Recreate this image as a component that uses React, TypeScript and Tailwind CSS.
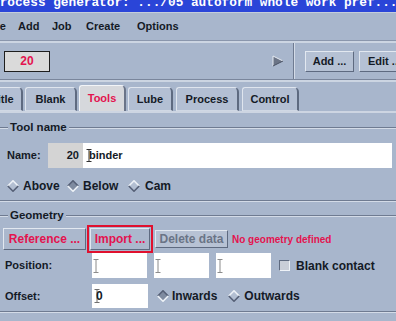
import React from "react";

const RED = "text-[#e3134f]";

function Etched({ className = "" }: { className?: string }) {
  return (
    <div
      className={`h-[2px] border-t border-b border-t-[#6f7b91] border-b-[#d3dbe7] ${className}`}
    />
  );
}

function Diamond({ on = false }: { on?: boolean }) {
  return (
    <svg width="12" height="12" viewBox="0 0 12 12" className="shrink-0">
      <polygon points="6,0.8 11.2,6 6,11.2 0.8,6" fill={on ? "#7f8ba0" : "#b3bfd2"} />
      <polyline
        points="0.8,6 6,0.8 11.2,6"
        fill="none"
        stroke={on ? "#566076" : "#eef2f7"}
        strokeWidth="1.6"
      />
      <polyline
        points="0.8,6 6,11.2 11.2,6"
        fill="none"
        stroke={on ? "#eef2f7" : "#566076"}
        strokeWidth="1.6"
      />
    </svg>
  );
}

function IBeam({ color = "#8c8c8c", h = 14 }: { color?: string; h?: number }) {
  return (
    <svg width="6" height={h} viewBox={`0 0 6 ${h}`} className="shrink-0">
      <path
        d={`M0.5 0.5h5 M3 0.5v${h - 1} M0.5 ${h - 0.5}h5`}
        stroke={color}
        strokeWidth="1"
        fill="none"
      />
    </svg>
  );
}

function Tab({
  label,
  w,
  active = false,
  className = "",
}: {
  label: string;
  w: string;
  active?: boolean;
  className?: string;
}) {
  return (
    <div
      className={`${w} ${className} shrink-0 flex items-center justify-center rounded-tl-[3px] rounded-tr-[5px] border-t border-l border-r-2 ${
        active
          ? "h-[26px] bg-[#d6d8dc] text-[#e3134f] border-t-[#f2f4f7] border-l-[#f2f4f7] border-r-[#6a7488]"
          : "h-[24px] bg-[#b3bfd3] text-[#141a26] border-t-[#dfe5ee] border-l-[#dfe5ee] border-r-[#5e6a80] border-b border-b-[#d0d8e4]"
      } text-[11px] font-bold`}
    >
      {label}
    </div>
  );
}

function GroupHeader({ label }: { label: string }) {
  return (
    <div className="h-[14px] flex items-center">
      <Etched className="w-[8px] shrink-0" />
      <span className="px-[2px] text-[11.5px] font-bold text-[#141a26] leading-none">{label}</span>
      <Etched className="flex-1" />
    </div>
  );
}

export default function App() {
  return (
    <div className="w-[396px] h-[321px] overflow-hidden bg-[#a8b6cc] font-['Liberation_Sans',Arial,sans-serif] text-[#141a26] flex flex-col">
      {/* Title bar */}
      <div className="h-[12px] shrink-0 bg-[#2a45d8] overflow-hidden whitespace-nowrap">
        <div className="ml-[-8px] mt-[-4px] font-['Liberation_Mono',monospace] font-bold text-[12.75px] leading-[14px] text-white">
          Process generator: .../05 autoform whole work pref...
        </div>
      </div>
      <div className="h-[1px] shrink-0 bg-[#c4cddb]" />

      {/* Menu bar */}
      <div className="h-[27px] shrink-0 flex items-center text-[11px] font-bold whitespace-nowrap">
        <span className="ml-[-13px] w-[31px] shrink-0">File</span>
        <span className="w-[34px] shrink-0">Add</span>
        <span className="w-[34px] shrink-0">Job</span>
        <span className="w-[51px] shrink-0">Create</span>
        <span className="shrink-0">Options</span>
      </div>
      <div className="h-[1px] shrink-0 bg-[#8a96ac]" />
      <div className="h-[2px] shrink-0 bg-[#ccd5e2]" />

      {/* Toolbar */}
      <div className="h-[36px] shrink-0 flex items-center">
        <div className="ml-[4px] w-[46px] h-[21px] shrink-0 bg-[#dadada] border border-[#1e1e1e] flex items-center justify-center">
          <span className={`${RED} text-[12px] font-bold`}>20</span>
        </div>
        <svg width="12" height="12" viewBox="0 0 12 12" className="ml-[222px] shrink-0">
          <polygon points="1,1 11,6 1,11" fill="#6b7486" />
          <polyline points="1,11 1,1 11,6" fill="none" stroke="#e6ebf2" strokeWidth="1" />
          <line x1="1" y1="11" x2="11" y2="6" stroke="#4a5264" strokeWidth="1" />
        </svg>
        <div className="ml-[9px] self-stretch w-[2px] shrink-0 border-l border-r border-l-[#6f7b91] border-r-[#d3dbe7]" />
        <div className="ml-[10px] w-[49px] h-[21px] shrink-0 bg-[#b5c1d4] border border-t-[#e2e8f0] border-l-[#e2e8f0] border-r-[#5e6a80] border-b-[#5e6a80] flex items-center justify-center text-[11px] font-bold">
          Add ...
        </div>
        <div className="ml-[5px] w-[50px] h-[21px] shrink-0 bg-[#b5c1d4] border border-t-[#e2e8f0] border-l-[#e2e8f0] border-r-[#5e6a80] border-b-[#5e6a80] flex items-center pl-[8px] text-[11px] font-bold whitespace-nowrap">
          Edit ...
        </div>
      </div>
      <div className="h-[1px] shrink-0 bg-[#7a869c]" />
      <div className="h-[2px] shrink-0 bg-[#ccd5e2]" />

      {/* Tabs */}
      <div className="h-[29px] shrink-0 flex items-end gap-[2px]">
        <Tab label="Title" w="w-[40px]" className="ml-[-17px]" />
        <Tab label="Blank" w="w-[52px]" />
        <Tab label="Tools" w="w-[47px]" active />
        <Tab label="Lube" w="w-[45px]" />
        <Tab label="Process" w="w-[63px]" className="ml-[1px]" />
        <Tab label="Control" w="w-[57px]" className="ml-[1px]" />
      </div>
      <div className="h-[2px] shrink-0 bg-[#cdd5e2]" />

      {/* Tool name group */}
      <div className="h-[8px] shrink-0" />
      <GroupHeader label="Tool name" />
      <div className="h-[8px] shrink-0" />
      <div className="h-[25px] shrink-0 flex items-center pl-[7px]">
        <span className="w-[41px] shrink-0 text-[11px] font-bold">Name:</span>
        <div className="w-[35px] h-[25px] shrink-0 bg-[#d4d4d4] flex items-center justify-end pr-[4px] text-[11px] font-bold">
          20
        </div>
        <div className="w-[309px] h-[25px] shrink-0 bg-white flex items-center pl-[3px] text-[11px] font-bold">
          <IBeam color="#303030" h={13} />
          <span className="ml-[-3px]">binder</span>
        </div>
      </div>
      <div className="h-[8px] shrink-0" />
      <div className="h-[20px] shrink-0 flex items-center pl-[7px] text-[12px] font-bold">
        <div className="w-[60px] shrink-0 flex items-center">
          <Diamond />
          <span className="ml-[4px]">Above</span>
        </div>
        <div className="w-[61px] shrink-0 flex items-center">
          <Diamond on />
          <span className="ml-[4px]">Below</span>
        </div>
        <div className="flex items-center">
          <Diamond />
          <span className="ml-[5px]">Cam</span>
        </div>
      </div>
      <div className="h-[4px] shrink-0" />
      <Etched className="shrink-0" />

      {/* Geometry group */}
      <div className="h-[7px] shrink-0" />
      <GroupHeader label="Geometry" />
      <div className="h-[2px] shrink-0" />
      <div className="h-[28px] shrink-0 flex items-center pl-[3px] text-[12px] font-bold whitespace-nowrap">
        <div className={`w-[83px] h-[22px] shrink-0 bg-[#abb8cd] border border-t-[#e2e8f0] border-l-[#e2e8f0] border-r-[#5e6a80] border-b-[#5e6a80] flex items-center justify-center ${RED}`}>
          Reference ...
        </div>
        <div className="ml-[1px] w-[66px] h-[28px] shrink-0 border-2 border-[#e0102e] p-[1px]">
          <div className={`w-full h-full bg-[#abb8cd] border border-t-[#e2e8f0] border-l-[#e2e8f0] border-r-[#5e6a80] border-b-[#5e6a80] flex items-center justify-center ${RED}`}>
            Import ...
          </div>
        </div>
        <div className="ml-[2px] w-[73px] h-[18px] shrink-0 bg-[#b7c2d4] border border-t-[#e2e8f0] border-l-[#e2e8f0] border-r-[#5e6a80] border-b-[#5e6a80] flex items-center justify-center text-[#6a7486]">
          Delete data
        </div>
        <span className={`ml-[4px] text-[10px] ${RED}`}>No geometry defined</span>
      </div>

      <div className="h-[25px] shrink-0 flex items-center pl-[5px] text-[11px] font-bold whitespace-nowrap">
        <span className="w-[87px] shrink-0">Position:</span>
        <div className="w-[55px] h-[25px] shrink-0 bg-white flex items-center pl-[1px]">
          <IBeam />
        </div>
        <div className="ml-[7px] w-[55px] h-[25px] shrink-0 bg-white flex items-center pl-[1px]">
          <IBeam />
        </div>
        <div className="ml-[7px] w-[55px] h-[25px] shrink-0 bg-white flex items-center pl-[1px]">
          <IBeam />
        </div>
        <div className="ml-[8px] w-[11px] h-[11px] shrink-0 bg-[#c9ced8] border border-t-[#5e6a80] border-l-[#5e6a80] border-r-[#eef2f7] border-b-[#eef2f7]" />
        <span className="ml-[6px] text-[12px]">Blank contact</span>
      </div>
      <div className="h-[6px] shrink-0" />
      <div className="h-[24px] shrink-0 flex items-center pl-[5px] text-[11px] font-bold whitespace-nowrap">
        <span className="w-[87px] shrink-0">Offset:</span>
        <div className="w-[56px] h-[24px] shrink-0 bg-white flex items-center pl-[2px]">
          <IBeam color="#707070" />
          <span className="ml-[-4px] text-[12px]">0</span>
        </div>
        <div className="ml-[9px] flex items-center text-[12px]">
          <Diamond on />
          <span className="ml-[3px]">Inwards</span>
        </div>
        <div className="ml-[11px] flex items-center text-[12px]">
          <Diamond />
          <span className="ml-[4px]">Outwards</span>
        </div>
      </div>
      <div className="h-[3px] shrink-0" />
      <Etched className="shrink-0" />
    </div>
  );
}
